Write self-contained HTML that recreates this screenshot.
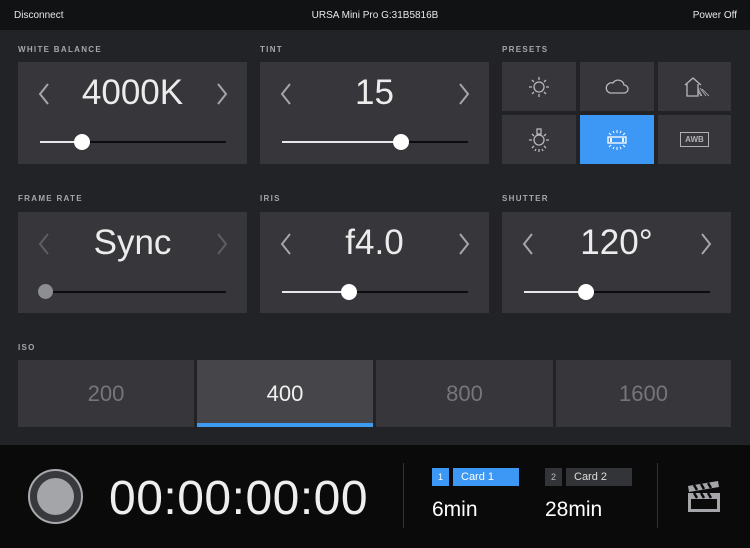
<!DOCTYPE html>
<html><head><meta charset="utf-8"><style>
*{margin:0;padding:0;box-sizing:border-box}
body{width:750px;height:548px;background:#222327;font-family:"Liberation Sans",sans-serif;color:#fff;position:relative;overflow:hidden}
.a{position:absolute}
.top{left:0;top:0;width:750px;height:30px;background:#111214;font-size:10px;color:#e8e8e8}
.lbl{font-size:8px;font-weight:bold;letter-spacing:1.3px;color:#a6a7ab}
.p{background:#37373b}
.val{font-size:35px;text-align:center;color:#ececec;width:229px;left:0;top:11px}
.ch{top:21px}
.line{height:2px;background:#0d0d0f;top:79px}
.fill{height:2px;background:#e8e8e8;top:79px}
.knob{width:16px;height:16px;border-radius:50%;background:#fff;top:72px}
.pc{background:#37373b}
.iso{top:360px;height:67px;background:#37373b;font-size:22px;color:#75767a;text-align:center;line-height:67px}
.bot{left:0;top:445px;width:750px;height:103px;background:#0a0a0b}
</style></head><body>
<svg width="0" height="0" style="position:absolute"><defs>
<symbol id="l" viewBox="0 0 12 22"><polyline points="10,1 2,11 10,21" fill="none" stroke="currentColor" stroke-width="2"/></symbol>
<symbol id="r" viewBox="0 0 12 22"><polyline points="2,1 10,11 2,21" fill="none" stroke="currentColor" stroke-width="2"/></symbol>
</defs></svg>
<div class="a top"><span class="a" style="left:14px;top:10px">Disconnect</span><span class="a" style="left:0;width:750px;text-align:center;top:10px">URSA Mini Pro G:31B5816B</span><span class="a" style="right:13px;top:10px">Power Off</span></div>

<div class="a lbl" style="left:18px;top:45px">WHITE BALANCE</div>
<div class="a lbl" style="left:260px;top:45px">TINT</div>
<div class="a lbl" style="left:502px;top:45px">PRESETS</div>
<div class="a lbl" style="left:18px;top:194px">FRAME RATE</div>
<div class="a lbl" style="left:260px;top:194px">IRIS</div>
<div class="a lbl" style="left:502px;top:194px">SHUTTER</div>
<div class="a lbl" style="left:18px;top:343px">ISO</div>

<div class="a p" style="left:18px;top:62px;width:229px;height:102px">
<div class="a val">4000K</div><svg class="a ch" style="left:20px;color:#a5a6aa" width="12" height="22"><use href="#l"/></svg><svg class="a ch" style="left:198px;color:#a5a6aa" width="12" height="22"><use href="#r"/></svg>
<div class="a line" style="left:22px;width:186px"></div><div class="a fill" style="left:22px;width:42px"></div><div class="a knob" style="left:56px"></div></div>
<div class="a p" style="left:260px;top:62px;width:229px;height:102px">
<div class="a val">15</div><svg class="a ch" style="left:20px;color:#a5a6aa" width="12" height="22"><use href="#l"/></svg><svg class="a ch" style="left:198px;color:#a5a6aa" width="12" height="22"><use href="#r"/></svg>
<div class="a line" style="left:22px;width:186px"></div><div class="a fill" style="left:22px;width:119px"></div><div class="a knob" style="left:133px"></div></div>
<div class="a p" style="left:18px;top:212px;width:229px;height:101px">
<div class="a val">Sync</div><svg class="a ch" style="left:20px;color:#5e5f63" width="12" height="22"><use href="#l"/></svg><svg class="a ch" style="left:198px;color:#5e5f63" width="12" height="22"><use href="#r"/></svg>
<div class="a line" style="left:22px;width:186px"></div><div class="a knob" style="left:20px;background:#8d8e92;width:15px;height:15px"></div></div>
<div class="a p" style="left:260px;top:212px;width:229px;height:101px">
<div class="a val">f4.0</div><svg class="a ch" style="left:20px;color:#a5a6aa" width="12" height="22"><use href="#l"/></svg><svg class="a ch" style="left:198px;color:#a5a6aa" width="12" height="22"><use href="#r"/></svg>
<div class="a line" style="left:22px;width:186px"></div><div class="a fill" style="left:22px;width:67px"></div><div class="a knob" style="left:81px"></div></div>
<div class="a p" style="left:502px;top:212px;width:229px;height:101px">
<div class="a val">120°</div><svg class="a ch" style="left:20px;color:#a5a6aa" width="12" height="22"><use href="#l"/></svg><svg class="a ch" style="left:198px;color:#a5a6aa" width="12" height="22"><use href="#r"/></svg>
<div class="a line" style="left:22px;width:186px"></div><div class="a fill" style="left:22px;width:62px"></div><div class="a knob" style="left:76px"></div></div>

<div class="a pc" style="left:502px;top:62px;width:74px;height:49px"><svg class="a" style="left:25px;top:13px" width="24" height="24" viewBox="0 0 24 24" fill="none" stroke="#b8b8bb" stroke-width="1.3"><circle cx="12" cy="12" r="5"/><path d="M12 2v3M12 19v3M2 12h3M19 12h3M5 5l2 2M17 17l2 2M5 19l2-2M17 7l2-2"/></svg></div>
<div class="a pc" style="left:580px;top:62px;width:74px;height:49px"><svg class="a" style="left:24px;top:14px" width="26" height="20" viewBox="0 0 26 20" fill="none" stroke="#b8b8bb" stroke-width="1.3"><path d="M6 17h14a4 4 0 0 0 0-8 6 6 0 0 0-11-2 5 5 0 0 0-3 10z"/></svg></div>
<div class="a pc" style="left:658px;top:62px;width:73px;height:49px"><svg class="a" style="left:25px;top:13px" width="28" height="24" viewBox="0 0 28 24" fill="none" stroke="#b8b8bb" stroke-width="1.3"><path d="M2 10L10 3l8 7M4 9v12h11V9"/><path d="M15 13l4 8M15 16l3 5M17 13l6 8M19 14l7 7" stroke-width="0.8"/></svg></div>
<div class="a pc" style="left:502px;top:115px;width:74px;height:49px"><svg class="a" style="left:25px;top:12px" width="24" height="26" viewBox="0 0 24 26" fill="none" stroke="#b8b8bb" stroke-width="1.3"><rect x="10" y="2" width="4" height="5"/><circle cx="12" cy="13" r="5"/><path d="M2 13h3M19 13h3M5 7l2 2M17 19l2 2M5 21l2-2M17 9l2-2M12 22v3M9 22l-1 2M15 22l1 2"/></svg></div>
<div class="a" style="left:580px;top:115px;width:74px;height:49px;background:#3d97f5"><svg class="a" style="left:24px;top:12px" width="26" height="26" viewBox="0 0 26 26" fill="none" stroke="#fff" stroke-width="1.3"><rect x="4" y="10" width="18" height="6"/><path d="M7 11v4M19 11v4" stroke-width="1.8"/><path d="M13 3v3M9 4l1 2M17 4l-1 2M5 6l2 2M21 6l-2 2M13 20v3M9 22l1-2M17 22l-1-2M5 20l2-2M21 20l-2-2" stroke-width="1"/></svg></div>
<div class="a pc" style="left:658px;top:115px;width:73px;height:49px"><div class="a" style="left:22px;top:17px;width:29px;height:15px;border:1.3px solid #b0b0b3;font-size:8px;font-weight:bold;color:#b0b0b3;text-align:center;line-height:13px">AWB</div></div>

<div class="a iso" style="left:18px;width:176px">200</div>
<div class="a iso" style="left:197px;width:176px;background:#46464a;color:#f0f0f0">400</div>
<div class="a" style="left:197px;top:423px;width:176px;height:4px;background:#3d9bf0"></div>
<div class="a iso" style="left:376px;width:177px">800</div>
<div class="a iso" style="left:556px;width:175px">1600</div>

<div class="a bot"></div>
<div class="a" style="left:28px;top:469px;width:55px;height:55px;border-radius:50%;border:2px solid #a8a9ad;background:#38393d"></div>
<div class="a" style="left:37px;top:478px;width:37px;height:37px;border-radius:50%;background:#a3a5a9"></div>
<div class="a" style="left:109px;top:471px;font-size:48px;letter-spacing:0.5px;color:#eeeeee">00:00:00:00</div>
<div class="a" style="left:403px;top:463px;width:1px;height:65px;background:#333"></div>
<div class="a" style="left:657px;top:463px;width:1px;height:65px;background:#333"></div>
<div class="a" style="left:432px;top:468px;width:17px;height:18px;background:#3d97f5;font-size:9px;text-align:center;line-height:18px">1</div>
<div class="a" style="left:453px;top:468px;width:66px;height:18px;background:#3d97f5;font-size:11px;line-height:18px;padding-left:8px">Card 1</div>
<div class="a" style="left:545px;top:468px;width:17px;height:18px;background:#333437;font-size:9px;text-align:center;line-height:18px;color:#bbb">2</div>
<div class="a" style="left:566px;top:468px;width:66px;height:18px;background:#333437;font-size:11px;line-height:18px;padding-left:8px;color:#ddd">Card 2</div>
<div class="a" style="left:432px;top:498px;font-size:21px">6min</div>
<div class="a" style="left:545px;top:498px;font-size:21px">28min</div>
<svg class="a" style="left:686px;top:480px" width="36" height="34" viewBox="0 0 36 34"><path d="M2 6L32 1l1 6L3 12z" fill="#a5a6aa"/><path d="M8 5l3 5M15 4l3 5M22 3l3 5" stroke="#0a0a0b" stroke-width="2.5"/><rect x="2" y="13" width="32" height="19" fill="#a5a6aa"/><rect x="5" y="19" width="26" height="10" fill="#0a0a0b"/><path d="M8 13l3 5M15 13l3 5M22 13l3 5" stroke="#0a0a0b" stroke-width="2.5"/></svg>
</body></html>
